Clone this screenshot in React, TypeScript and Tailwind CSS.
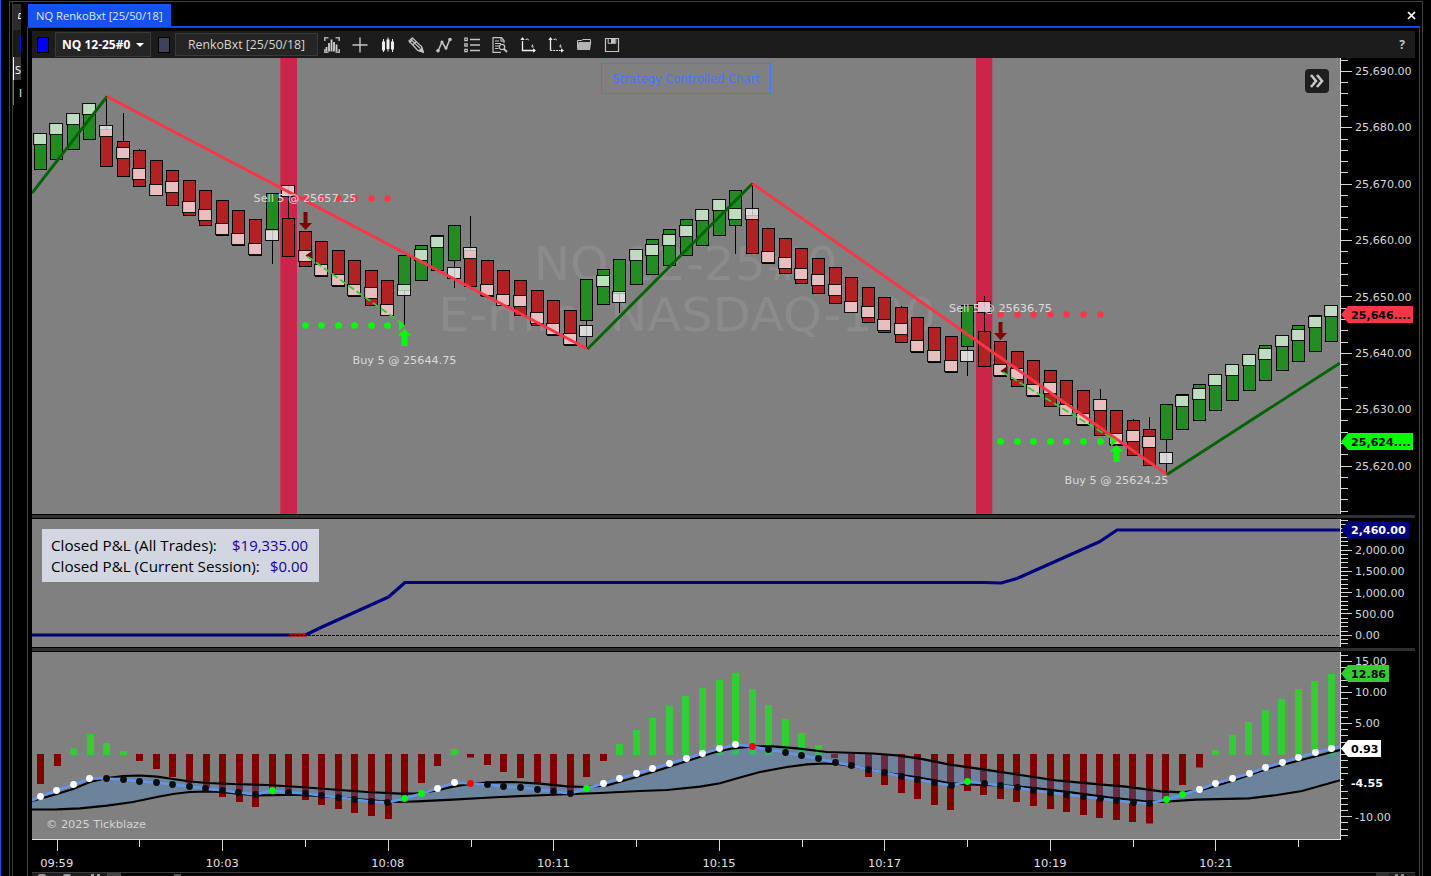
import React from "react";

const FONT = "'DejaVu Sans', Verdana, sans-serif";
const snap = (i: number) => Math.floor(34.22 + 16.56 * i);
const mid = (i: number) => snap(i) + 6.5;
const barX = (i: number) => Math.floor(37.5 + 16.55 * i);

// [direction, body top, body bottom, average box top, wick top, wick bottom]
type Candle = [0 | 1, number, number, number, number?, number?];
const candles: Candle[] = [
  [1, 133, 170, 133], [1, 123, 160, 123], [1, 113, 150, 113], [1, 103, 140, 103],
  [0, 129, 167, 125, 96, 129], [0, 141, 177, 147, 113, 141], [0, 150, 187, 168, 149, 150],
  [0, 160, 196, 184], [0, 170, 206, 181], [0, 180, 216, 201], [0, 190, 226, 209],
  [0, 200, 236, 223], [0, 210, 246, 233], [0, 219, 256, 243],
  [1, 193, 231, 229, 193, 264], [0, 218, 257, 185, 185, 218], [0, 231, 267, 250],
  [0, 241, 277, 264], [0, 250, 287, 274], [0, 260, 297, 284], [0, 270, 306, 287],
  [0, 280, 316, 304], [1, 255, 291, 284, 255, 325], [1, 245, 281, 249], [1, 235, 271, 236],
  [1, 225, 261, 267, 225, 288], [0, 250, 287, 247, 216, 250], [0, 260, 297, 284],
  [0, 270, 306, 294], [0, 280, 316, 295], [0, 290, 326, 312], [0, 300, 336, 323],
  [0, 310, 346, 333], [1, 279, 321, 325, 279, 349], [1, 269, 305, 275],
  [1, 259, 294, 291, 259, 313], [1, 249, 285, 249], [1, 239, 275, 244], [1, 229, 266, 234],
  [1, 219, 256, 225], [1, 209, 246, 209], [1, 199, 236, 199], [1, 190, 226, 208, 190, 254],
  [0, 215, 254, 208, 183, 215], [0, 228, 264, 251], [0, 238, 274, 257], [0, 248, 284, 268],
  [0, 258, 294, 274], [0, 267, 304, 284], [0, 277, 313, 301], [0, 287, 323, 306],
  [0, 297, 333, 319], [0, 307, 343, 323, 306, 307], [0, 317, 353, 340], [0, 327, 363, 350],
  [0, 336, 373, 360], [1, 305, 347, 350, 305, 376], [0, 331, 367, 301, 296, 331],
  [0, 341, 377, 364], [0, 351, 387, 368], [0, 360, 397, 384], [0, 370, 407, 382],
  [0, 380, 416, 404], [0, 390, 426, 413], [0, 399, 436, 399, 389, 399], [0, 410, 446, 433],
  [0, 420, 456, 430, 419, 420], [0, 429, 466, 436, 417, 429], [1, 404, 440, 452, 404, 475],
  [1, 394, 430, 395], [1, 384, 421, 388], [1, 374, 411, 374], [1, 364, 401, 364],
  [1, 354, 391, 354], [1, 345, 381, 348], [1, 335, 371, 335], [1, 325, 362, 329],
  [1, 315, 352, 316], [1, 305, 342, 305],
];

const bars = [
  784, 766, 748.5, 734, 743, 751, 761, 769, 777, 783, 789, 797, 802, 807, 792, 796, 800, 805, 809,
  813, 816, 819, 799, 783, 766, 749, 757.5, 765, 772, 778, 784, 789, 794, 777, 761, 744, 730, 718,
  706, 696, 688, 680, 673, 689, 705, 719, 733, 745, 758, 768, 777, 785, 793, 799, 805, 810, 791,
  795, 799, 802, 806, 809, 812, 815, 818, 820, 822, 823.5, 803, 785, 767.5, 750, 735, 722, 710,
  699, 689, 681, 674,
];

const dots = [
  796.5, 790.5, 784.5, 778.5, 778.5, 779.5, 781.5, 782.5, 784.5, 786.5, 788.5, 790.5, 792.5,
  794.5, 790.5, 792.5, 793.5, 795.5, 797.5, 799.5, 801.5, 802.5, 798.5, 793.5, 788.5, 782.5,
  783.5, 784.5, 786.5, 787.5, 789.5, 791.5, 793.5, 788.5, 783.5, 778.5, 773.5, 768.5, 763.5,
  758.5, 753.5, 748.5, 744.5, 746.5, 749.5, 752.5, 755.5, 758.5, 762.5, 765.5, 769.5, 772.5,
  776.5, 779.5, 782.5, 785.5, 781.5, 783.5, 785.5, 787.5, 790.5, 792.5, 794.5, 796.5, 798.5,
  800.5, 802.5, 803.5, 799.5, 794.5, 789.5, 783.5, 778.5, 773.5, 767.5, 762.5, 757.5, 752.5, 748.5,
];
const LIME = [14, 22, 23, 33, 56, 68, 69];
const dotColor = (i: number) => {
  if (LIME.includes(i)) return "#00ff00";
  if (i === 26 || i === 43) return "#ff0000";
  if (i < 4 || i === 24 || i === 25 || (i > 33 && i < 43) || i > 69) return "#ffffff";
  return "#0c0c0c";
};

const upper: [number, number][] = [
  [32, 801], [57, 794], [73, 789], [90, 782], [107, 778], [123, 776], [140, 775.5], [157, 776.7],
  [173, 779], [190, 781.5], [207, 783], [233, 784], [267, 785], [300, 787], [333, 789.5],
  [367, 792], [400, 793.7], [417, 793.3], [437, 790.3], [453, 786.7], [470, 784], [490, 782.3],
  [513, 782], [540, 783.7], [567, 786.3], [587, 787], [607, 785.3], [633, 778], [660, 769.7],
  [687, 761], [713, 752.7], [733, 748.3], [753, 746.3], [773, 746.3], [797, 748.3], [827, 752],
  [873, 753.5], [897, 755.3], [920, 758.7], [950, 764.7], [985, 769.7], [1020, 775],
  [1056, 780.3], [1091, 783.7], [1126, 786.7], [1161, 791.3], [1182, 792.3], [1200, 790.3],
  [1231, 781.3], [1266, 769.3], [1302, 759.7], [1340, 750],
];
const lower: [number, number][] = [
  [32, 809.5], [57, 809.3], [80, 808.3], [107, 805.7], [133, 802], [157, 797], [173, 794],
  [190, 792], [207, 791.5], [222, 792], [240, 794], [257, 795.3], [283, 795], [300, 795],
  [320, 796], [340, 797.7], [360, 799.3], [380, 801], [400, 802], [417, 801.3], [453, 799.7],
  [500, 797], [547, 795], [600, 793], [640, 791], [667, 790], [700, 786.7], [720, 783.3],
  [740, 777.5], [760, 772], [787, 767], [807, 764.3], [824, 763.5], [840, 764.2], [860, 767.5],
  [887, 773], [919, 777.5], [950, 783.3], [968, 784.3], [1003, 785.3], [1038, 788.3],
  [1073, 792.7], [1108, 797.3], [1143, 801], [1161, 802], [1196, 799.7], [1249, 798.3],
  [1277, 795], [1302, 791], [1340, 780.3],
];
const pts = (p: [number, number][]) => p.map((q) => q.join(",")).join(" ");

function Tag({ y, w, fill, color, text }: { y: number; w: number; fill: string; color: string; text: string }) {
  return (
    <g>
      <path d={`M1341 ${y} L1348 ${y - 8.5} H${w} V${y + 8.5} H1348 Z`} fill={fill} />
      <text x="1351" y={y + 4} fontSize="11.1" fontWeight="700" fill={color} fontFamily={FONT}>{text}</text>
    </g>
  );
}

function Ticks({ from, to, zero, step, every }: { from: number; to: number; zero: number; step: number; every: number }) {
  const out: React.ReactNode[] = [];
  const start = Math.ceil((from - zero) / step);
  const end = Math.floor((to - zero) / step);
  for (let k = start; k <= end; k++) {
    const y = Math.floor(zero + k * step);
    out.push(<rect key={k} x="1341" y={y} width={k % every === 0 ? 11 : 7} height="1" fill="#d4d4d4" />);
  }
  return <g>{out}</g>;
}

function AxisText({ y, children }: { y: number; children: string }) {
  return <text x="1355" y={y} fontSize="11.15" fill="#d6d6d6" fontFamily={FONT}>{children}</text>;
}

function Trade({ first, count, stop, target, entry, last, tipY }: { first: number; count: number; stop: number; target: number; entry: number; last: number; tipY: number }) {
  const x = mid(first);
  const e = mid(last);
  const idx = Array.from({ length: count }, (_, k) => first + k);
  return (
    <g>
      {idx.map((i) => (
        <g key={i}>
          <circle cx={mid(i)} cy={stop} r="3.2" fill="#fa3545" />
          <circle cx={mid(i)} cy={target} r="3.3" fill="#00ff00" />
        </g>
      ))}
      <path d={`M${x - 2} ${entry} h4 v11 h4.5 l-6.5 7 l-6.5 -7 h4.5 z`} fill="#800000" />
      <path d={`M${x} ${tipY} l7 -5 v10 z`} fill="#640808" />
      <path d={`M${x + 2} ${tipY + 1} L${e - 1} ${target - 1}`} stroke="#32cd32" strokeWidth="1.8" strokeDasharray="7 3" />
      <path d={`M${e - 5.5} ${target - 5} l6 5 l-6 5 z`} fill="#00ff00" />
      <path d={`M${e} ${target + 3.5} l7 6.5 h-4 v10.5 h-6 v-10.5 h-4 z`} fill="#00ff00" />
    </g>
  );
}

function PricePanel() {
  return (
    <svg className="block h-[456px] w-[1383px]" viewBox="32 58 1383 456">
      <rect x="32" y="58" width="1308" height="456" fill="#808080" />
      <g fill="#8b8b8b" fontFamily={FONT} fontSize="47">
        <text x="533.500" y="280" textLength="304" lengthAdjust="spacingAndGlyphs">NQ 12-25#0</text>
        <text x="438" y="331" textLength="498" lengthAdjust="spacingAndGlyphs">E-mini NASDAQ-100</text>
      </g>
      <rect x="280.3" y="58" width="16.7" height="456" fill="#cb2649" />
      <rect x="976" y="58" width="16.3" height="456" fill="#cb2649" />
      <g>
        {candles.map(([up, top, bottom, , wt, wb], i) => (
          <g key={i}>
            {wt !== undefined && wb !== undefined && (
              <rect x={snap(i) + 6} y={wt} width="1" height={wb - wt} fill="#000" />
            )}
            <rect x={snap(i) + 0.5} y={top + 0.5} width="12" height={bottom - top - 1} fill={up ? "#228b22" : "#b22222"} stroke="#000" />
          </g>
        ))}
        {candles.map(([, , , box], i) => (
          <rect key={i} x={snap(i) - 0.5} y={box + 0.5} width="13" height="11" fill="#fff" fillOpacity="0.71" stroke="#111" />
        ))}
      </g>
      <g fill="none" strokeWidth="2.9" strokeLinejoin="round">
        <path d="M32 193 L107 96.500" stroke="#006400" />
        <path d="M107 96.500 L587.500 349" stroke="#fa3545" />
        <path d="M587.500 349 L752.500 183.500" stroke="#006400" />
        <path d="M752.500 183.500 L1167 474.500" stroke="#fa3545" />
        <path d="M1167 474.500 L1340 363" stroke="#006400" />
      </g>
      <Trade first={16} count={6} stop={198.5} target={325.5} entry={212} last={22} tipY={255.5} />
      <Trade first={58} count={7} stop={314.5} target={441.5} entry={322} last={65} tipY={371} />
      <g fill="#d9d9d9" fontFamily={FONT} fontSize="11">
        <text x="253.500" y="202" textLength="103" lengthAdjust="spacingAndGlyphs">Sell 5 @ 25657.25</text>
        <text x="352.500" y="364" textLength="104" lengthAdjust="spacingAndGlyphs">Buy 5 @ 25644.75</text>
        <text x="949" y="312" textLength="103" lengthAdjust="spacingAndGlyphs">Sell 5 @ 25636.75</text>
        <text x="1064.500" y="484" textLength="104" lengthAdjust="spacingAndGlyphs">Buy 5 @ 25624.25</text>
      </g>
      <rect x="1340" y="58" width="1" height="456" fill="#e0e0e0" />
      <Ticks from={58} to={513} zero={71.4} step={11.275} every={5} />
      <AxisText y={75}>25,690.00</AxisText>
      <AxisText y={131}>25,680.00</AxisText>
      <AxisText y={188}>25,670.00</AxisText>
      <AxisText y={244}>25,660.00</AxisText>
      <AxisText y={301}>25,650.00</AxisText>
      <AxisText y={357}>25,640.00</AxisText>
      <AxisText y={413}>25,630.00</AxisText>
      <AxisText y={470}>25,620.00</AxisText>
      <Tag y={314.5} w={1413} fill="#f63546" color="#000" text="25,646...." />
      <Tag y={441.5} w={1413} fill="#00ff00" color="#000" text="25,624...." />
    </svg>
  );
}

function ProfitPanel() {
  return (
    <svg className="block h-[128px] w-[1383px]" viewBox="32 519 1383 128">
      <rect x="32" y="519" width="1308" height="128" fill="#808080" />
      <g fill="none" strokeWidth="3.2" strokeLinejoin="round">
        <path d="M32 635 H289" stroke="#000080" />
        <path d="M305.500 635 L322 627 L388.500 597 L405 582.500 H984 L1001 583 L1017 578.500 L1100 541.500 L1117 530 H1340" stroke="#000080" />
        <path d="M289 635 H306" stroke="#a00000" />
      </g>
      <path d="M32 635.500 H1340" stroke="#000" strokeDasharray="3 1" />
      <rect x="1340" y="519" width="1" height="128" fill="#e0e0e0" />
      <Ticks from={519} to={646.5} zero={635.3} step={4.265} every={5} />
      <AxisText y={554}>2,000.00</AxisText>
      <AxisText y={575}>1,500.00</AxisText>
      <AxisText y={597}>1,000.00</AxisText>
      <AxisText y={618}>500.00</AxisText>
      <AxisText y={639}>0.00</AxisText>
      <Tag y={530} w={1409} fill="#000080" color="#fff" text="2,460.00" />
    </svg>
  );
}

function OscillatorPanel() {
  const line: [number, number][] = [[32, 800.5], ...dots.map((y, i) => [mid(i), y] as [number, number]), [1340, 746.5]];
  return (
    <svg className="block h-[188px] w-[1383px]" viewBox="32 652 1383 188">
      <rect x="32" y="652" width="1308" height="187" fill="#808080" />
      {bars.map((y, i) =>
        y < 754 ? (
          <rect key={i} x={barX(i)} y={y} width="7" height={755 - y} fill="#32cd32" />
        ) : (
          <rect key={i} x={barX(i)} y="754" width="7" height={y - 754} fill="#800000" />
        ),
      )}
      <polygon points={`${pts(upper)} ${pts([...lower].reverse())}`} fill="#3c8cdc" fillOpacity="0.29" />
      <polyline points={pts(upper)} fill="none" stroke="#000" strokeWidth="2.2" />
      <polyline points={pts(lower)} fill="none" stroke="#000" strokeWidth="2.2" />
      <polyline points={pts(line)} fill="none" stroke="#6495ed" strokeWidth="2.5" />
      {dots.map((y, i) => (
        <circle key={i} cx={mid(i)} cy={y} r="3.4" fill={dotColor(i)} />
      ))}
      <text x="46" y="828" fontSize="11" fill="#d4d4d4" fontFamily={FONT} textLength="100" lengthAdjust="spacingAndGlyphs">© 2025 Tickblaze</text>
      <rect x="1340" y="652" width="1" height="188" fill="#e0e0e0" />
      <rect x="32" y="839" width="1309" height="1" fill="#e0e0e0" />
      <Ticks from={652} to={838} zero={754.6} step={6.215} every={5} />
      <AxisText y={665}>15.00</AxisText>
      <AxisText y={696}>10.00</AxisText>
      <AxisText y={727}>5.00</AxisText>
      <AxisText y={821}>-10.00</AxisText>
      <Tag y={673.5} w={1389} fill="#32cd32" color="#000" text="12.86" />
      <Tag y={748.5} w={1381} fill="#ffffff" color="#000" text="0.93" />
      <Tag y={783} w={1389} fill="#000000" color="#fff" text="-4.55" />
    </svg>
  );
}

function TimeAxis() {
  const labels = ["09:59", "10:03", "10:08", "10:11", "10:15", "10:17", "10:19", "10:21"];
  return (
    <svg className="block h-[32px] w-[1383px]" viewBox="32 840 1383 32">
      {Array.from({ length: 16 }, (_, k) => (
        <rect key={k} x={Math.floor(57.2 + k * 82.77)} y="840" width="1" height={k % 2 ? 7 : 11} fill="#d4d4d4" />
      ))}
      {labels.map((t, k) => (
        <text key={t} x={56.7 + k * 165.57} y="867" fontSize="11" fill="#e0e0e0" fontFamily={FONT} textAnchor="middle" textLength="33" lengthAdjust="spacingAndGlyphs">{t}</text>
      ))}
    </svg>
  );
}

const Separator = () => <div className="h-[5px] w-[1383px] border-y border-black bg-[#303030]" />;

function Icon({ children }: { children: React.ReactNode }) {
  return (
    <svg className="h-4 w-4 shrink-0" viewBox="0 0 16 16" fill="none" stroke="#c4c4c4" strokeWidth="1.2">
      {children}
    </svg>
  );
}

function ToolIcons() {
  return (
    <div className="ml-[6px] flex items-center gap-3">
      <Icon>
        <path d="M.8 4V.8H4.500M11.500.8h3.700V4M.8 12v3.200H4.500M11.500 15.200h3.700V12" strokeWidth="1.600" stroke="#aaa" />
        <path d="M2.500 14.500V10M5 14.500V6M7.500 14.500V2.500M10 14.500V5M12.500 14.500V7.500" strokeWidth="1.800" stroke="#d0d0d0" />
      </Icon>
      <Icon><path d="M8 .5v15M.5 8h15" strokeWidth="1.400" /></Icon>
      <Icon>
        <path d="M3.500 2v13M8 .5v14M12.500 2v13" strokeWidth="1" stroke="#eee" />
        <path d="M3.500 4.500v9M8 2.500v9.500M12.500 4.500v8" strokeWidth="3" stroke="#eee" />
      </Icon>
      <Icon>
        <path d="M1 4L4.300.9l9.200 8.600 1.700 5.500-5.700-1.800z" strokeWidth="1.300" />
        <path d="M2.700 2.400l9.300 8.900M1.500 5.500L4.500 2.500M5 7.700L8 4.800" strokeWidth="1.200" />
        <path d="M15.200 15l-1.200-4-3 2.700z" fill="#c4c4c4" />
      </Icon>
      <Icon>
        <path d="M2 14L6 5l4 6.500 4-9.500" strokeWidth="1.500" />
        <circle cx="2" cy="13.800" r="1.200" fill="#c4c4c4" /><circle cx="6" cy="5" r="1" fill="#c4c4c4" />
        <circle cx="10" cy="11" r="1" fill="#c4c4c4" /><circle cx="14" cy="2.500" r="1.200" fill="#c4c4c4" />
      </Icon>
      <Icon>
        <path d="M.8 1.200h2.400v2.400H.8zM.8 6.800h2.400v2.400H.8zM.8 12.300h2.400v2.400H.8z" />
        <path d="M6 2.500h10M6 8h10M6 13.500h10" strokeWidth="1.300" />
      </Icon>
      <Icon>
        <path d="M12 6V3.500L9.500.7H1v14.600h8" /><path d="M9 .7V4h3M3 4h4M3 6.500h6M3 9h4M3 11.500h3.500" />
        <circle cx="10" cy="10" r="2.700" /><path d="M12 12l3 3" strokeWidth="1.800" />
      </Icon>
      <Icon>
        <path d="M2.500 1v12.500H15" stroke="#eee" strokeWidth="1.300" strokeDasharray="2 1 100" />
        <path d="M.8 3L2.500.6 4.200 3M13 11.800l2.500 1.700-2.500 1.700" fill="#eee" stroke="#eee" strokeWidth=".8" />
        <path d="M5.500 2.500h3M12.500 7.500v3" strokeDasharray="1.500 1" /><path d="M7 1.200l1.500 2.200M11.200 9.200l2.600.8" strokeWidth=".9" />
      </Icon>
      <Icon>
        <path d="M2.500 1v12.500" stroke="#eee" strokeWidth="1.300" /><path d="M2.500 13.500h11" stroke="#eee" strokeDasharray="1.800 1" />
        <path d="M.8 3L2.500.6 4.200 3M13 11.800l2.500 1.700-2.500 1.700" fill="#eee" stroke="#eee" strokeWidth=".8" />
        <path d="M5.500 2.500h3M12.500 7.500v3" strokeDasharray="1.500 1" /><path d="M7 1.200l1.500 2.200M11.200 9.200l2.600.8" strokeWidth=".9" />
      </Icon>
      <Icon>
        <path d="M1.500 11V3.500h4l1.500-1h7.500V5" strokeWidth="1" /><path d="M1 12.900L2.500 5h12.800L14 12.900z" fill="#b4b4b4" stroke="none" />
      </Icon>
      <Icon>
        <path d="M1.500 1.500h13v13h-13z" strokeWidth="1.200" /><path d="M4.200 2v4.300h7.600V2" strokeWidth="1" /><path d="M7 2h4v4H7z" fill="#c4c4c4" stroke="none" />
      </Icon>
    </div>
  );
}

function Toolbar() {
  return (
    <div className="flex h-[27px] w-[1383px] items-center bg-[#1c1c1c] font-['Open_Sans',sans-serif] text-[#d4d4d4]">
      <div className="ml-[5px] h-[16px] w-[12px] border border-black bg-[#0000ff]" />
      <div className="ml-[6px] flex h-[25px] w-[96px] items-center border border-[#3a3a3a] bg-[#252525] pl-[6px] text-[12px] font-bold text-white">
        <span className="w-[68px] whitespace-nowrap">NQ 12-25#0</span>
        <svg className="ml-[6px] h-[4px] w-[8px]" viewBox="0 0 8 4"><path d="M0 0h8L4 4z" fill="#fff" /></svg>
      </div>
      <div className="ml-[7px] h-[16px] w-[12px] border border-black bg-[#40425c]" />
      <div className="ml-[5px] flex h-[23px] w-[143px] items-center justify-center whitespace-nowrap border border-[#3a3a3a] bg-[#252525] pt-[2px] text-[12.3px]">
        RenkoBxt [25/50/18]
      </div>
      <ToolIcons />
      <div className="ml-auto mr-[10px] text-[12px] font-bold text-[#c4c4c4]">?</div>
    </div>
  );
}

function BackWindow() {
  return (
    <div className="flex h-full w-[9px] flex-col border-l border-[#3a3a3a] font-['Open_Sans',sans-serif] text-[11px] leading-none text-white">
      <div className="mt-[2px] flex h-[26px] justify-end bg-[#2c2c2c] pt-[9px]">
        <svg className="h-[6px] w-[3px]" viewBox="0 0 3 6"><path d="M3 .5H1V4L0 5.500H3" fill="none" stroke="#fff" /></svg>
      </div>
      <div className="flex h-[27px] items-center justify-end bg-[#1a1a1a]"><div className="h-[15px] w-[2px] bg-[#0000ff]" /></div>
      <div className="h-[23px] border-l border-white bg-[#363636] pl-[1px] pt-[7px]">S</div>
      <div className="h-[25px] border-l border-[#777] pl-[5px] pt-[7px]">I</div>
    </div>
  );
}

function StatusEdge() {
  return (
    <div className="flex h-[4px] w-[1383px] items-start border-t border-[#3c3c3c]">
      <div className="flex h-[3px] w-[75px] items-end gap-[17px] bg-[#1c1c1c] pl-[6px]">
        <span className="h-[2px] w-[8px] rounded-t bg-[#9a9a9a]" />
        <span className="h-[2px] w-[8px] rounded-t bg-[#9a9a9a]" />
        <span className="ml-[3px] flex h-[2px] w-[9px] justify-between"><i className="w-[3px] bg-[#9a9a9a]" /><i className="w-[3px] bg-[#9a9a9a]" /></span>
      </div>
      <div className="h-[3px] w-[14px] bg-[#444]" />
      <div className="ml-[53px] mt-[1px] h-[2px] w-[7px] bg-[#555]" />
      <div className="ml-auto h-[3px] w-[13px] bg-[#2e2e2e]" />
      <div className="flex h-[3px] w-[26px] items-end gap-[3px] bg-[#1c1c1c] pl-[6px]">
        <span className="h-[2px] w-[3px] bg-[#888]" />
        <span className="h-[2px] w-[3px] bg-[#888]" />
      </div>
    </div>
  );
}

export default function App() {
  return (
    <div className="flex h-[876px] w-[1431px] overflow-hidden bg-black">
      <div className="h-full w-px shrink-0 bg-[#1550f0]" />
      <div className="ml-[8px] mt-px flex h-[875px] w-[1414px] shrink-0 border-x border-t border-[#424242]">
        <div className="ml-[2px] h-full"><BackWindow /></div>
        <div className="ml-[6px] flex h-full w-[1393px] flex-col">
          <div className="flex h-[24px] items-end pl-px font-['Open_Sans',sans-serif]">
            <div className="h-[22px] w-[143px] whitespace-nowrap bg-[#1550f0] pl-[8px] pt-[2px] text-[11.2px] leading-[20px] text-[#dfe6ff]">
              NQ RenkoBxt [25/50/18]
            </div>
            <svg className="mb-[6px] ml-auto mr-[4px] h-[9px] w-[9px]" viewBox="0 0 9 9"><path d="M1 1l7 7M8 1L1 8" stroke="#fff" strokeWidth="1.700" /></svg>
          </div>
          <div className="ml-px h-px w-[1392px] bg-[#1550f0]" />
          <div className="relative h-[849px] border-x border-t border-[#424242] pl-[4px] pt-[3px]">
            <Toolbar />
            <PricePanel />
            <Separator />
            <ProfitPanel />
            <Separator />
            <OscillatorPanel />
            <TimeAxis />
            <StatusEdge />
            <div className="absolute left-[573px] top-[35px] flex h-[31px] w-[170px] items-center justify-center whitespace-nowrap border border-[#4477fa] pt-[3px] font-['DejaVu_Sans',sans-serif] text-[11.5px] text-[#4477fa]">
              Strategy Controlled Chart
            </div>
            <div className="absolute left-[1277px] top-[41px] flex h-[24px] w-[24px] items-center justify-center rounded bg-[#1e1e1e]">
              <svg className="h-[14px] w-[14px]" viewBox="0 0 14 14" fill="none" stroke="#c8c8c8" strokeWidth="2.600"><path d="M1 1l5 6-5 6M7 1l5 6-5 6" /></svg>
            </div>
            <div className="absolute left-[14px] top-[501px] flex h-[53px] w-[277px] flex-col justify-center whitespace-nowrap bg-[#d2d6e0] px-[9px] font-['Open_Sans',sans-serif] text-[15.2px] leading-[21px] text-black">
              <div className="flex justify-between pr-[2px]"><span>Closed P&amp;L (All Trades):</span><span className="text-[14.900px] text-[#1a0096]">$19,335.00</span></div>
              <div className="flex justify-between pr-[2px]"><span>Closed P&amp;L (Current Session):</span><span className="text-[14.900px] text-[#1a0096]">$0.00</span></div>
            </div>
          </div>
        </div>
      </div>
    </div>
  );
}
